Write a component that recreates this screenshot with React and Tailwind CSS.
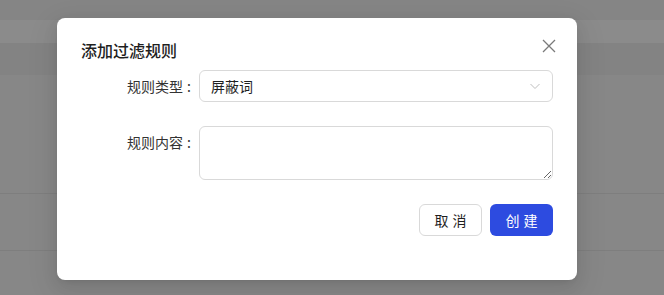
import React from "react";

const font = { fontFamily: '"Noto Sans CJK SC", "Noto Sans", sans-serif' };

export default function App() {
  return (
    <div className="relative w-[664px] h-[295px] overflow-hidden bg-[#878787]" style={font}>
      {/* background page (under overlay) */}
      <div className="flex flex-col">
        <div className="h-[20px] bg-[#858585]" />
        <div className="h-[23px] bg-[#8b8b8b]" />
        <div className="h-[32px] bg-[#838383]" />
        <div className="h-[119px] bg-[#878787] border-b border-[#7e7e7e]" />
        <div className="h-[57px] bg-[#878787] border-b border-[#7e7e7e]" />
        <div className="flex-1 bg-[#878787]" />
      </div>

      {/* modal */}
      <div className="absolute left-[57px] top-[18px] w-[520px] h-[262px] bg-white rounded-[8px] shadow-[0_6px_16px_0_rgba(0,0,0,0.08),0_3px_6px_-4px_rgba(0,0,0,0.12),0_9px_28px_8px_rgba(0,0,0,0.05)] px-[24px] pt-[20px]">
        <div className="flex items-center justify-between h-[24px]">
          <div className="text-[16px] leading-[24px] font-medium text-[#1f1f1f]">添加过滤规则</div>
        </div>
        <button className="absolute right-[20px] top-[20px] w-[16px] h-[16px] flex items-center justify-center">
          <svg width="14" height="14" viewBox="0 0 14 14" fill="none">
            <path d="M1 1L13 13M13 1L1 13" stroke="#7a7a7a" strokeWidth="1.3" />
          </svg>
        </button>

        <div className="mt-[8px] flex flex-col gap-[24px]">
          <div className="flex items-start">
            <div className="w-[118px] h-[32px] flex items-center justify-end text-[14px] text-[#333]">
              <span>规则类型</span>
              <span className="ml-[4px] mr-[8px]">:</span>
            </div>
            <div className="flex-1 h-[32px] border border-[#d9d9d9] rounded-[6px] flex items-center justify-between pl-[11px] pr-[11px]">
              <span className="text-[14px] text-[#1f1f1f]">屏蔽词</span>
              <svg width="12" height="12" viewBox="0 0 12 12" fill="none">
                <path d="M1.5 4L6 8.5L10.5 4" stroke="#bfbfbf" strokeWidth="1" />
              </svg>
            </div>
          </div>

          <div className="flex items-start">
            <div className="w-[118px] h-[32px] flex items-center justify-end text-[14px] text-[#333]">
              <span>规则内容</span>
              <span className="ml-[4px] mr-[8px]">:</span>
            </div>
            <textarea
              className="flex-1 h-[54px] border border-[#d9d9d9] rounded-[6px] px-[11px] py-[4px] text-[14px] outline-none"
            />
          </div>

          <div className="flex justify-end gap-[8px]">
            <button className="w-[63px] h-[32px] border border-[#d9d9d9] rounded-[6px] bg-white text-[14px] text-[#1f1f1f] tracking-[4px] pl-[4px]">
              取消
            </button>
            <button className="w-[63px] h-[32px] rounded-[6px] bg-[#2d4be0] text-[14px] text-white tracking-[4px] pl-[4px]">
              创建
            </button>
          </div>
        </div>
      </div>
    </div>
  );
}
